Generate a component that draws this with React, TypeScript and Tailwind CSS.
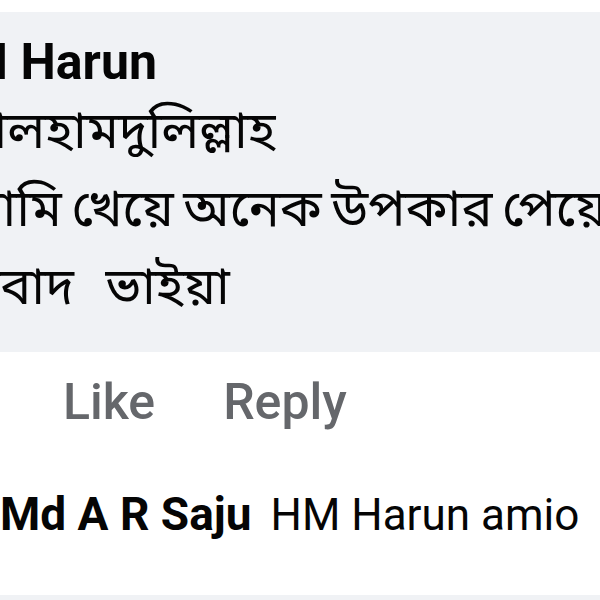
const roboto = { fontFamily: "Roboto, 'Liberation Sans', sans-serif" }
const bangla = { fontFamily: "'Noto Sans Bengali', 'Noto Sans', Roboto, sans-serif" }

export default function App() {
  return (
    <div className="w-[600px] h-[600px] overflow-hidden bg-white flex flex-col" style={roboto}>
      <div className="mt-[12px] h-[340px] bg-[#f0f2f5] pt-[20px] overflow-hidden">
        <div className="-ml-[71px] text-[50px] leading-[60px] font-bold text-[#050505] whitespace-nowrap">HM Harun</div>
        <div className="mt-[4px] text-[52px] leading-[78px] text-[#050505] whitespace-nowrap" style={bangla}>
          <div className="-ml-[53px]">আলহামদুলিল্লাহ</div>
          <div className="-ml-[44px] [word-spacing:-4px]">আমি খেয়ে অনেক উপকার পেয়েছি</div>
          <div className="-ml-[76px] [word-spacing:18px]">ধন্যবাদ ভাইয়া</div>
        </div>
      </div>
      <div className="flex items-center gap-[68px] pl-[63px] h-[100px] text-[50px] font-medium text-[#65676b]">
        <span>Like</span>
        <span>Reply</span>
      </div>
      <div className="flex items-baseline gap-[19px] mt-[28px] text-[#050505] whitespace-nowrap">
        <span className="text-[46px] font-bold">Md A R Saju</span>
        <span className="text-[44px]">HM Harun amio</span>
      </div>
      <div className="mt-auto h-[5px] bg-[#f0f2f5]" />
    </div>
  )
}
